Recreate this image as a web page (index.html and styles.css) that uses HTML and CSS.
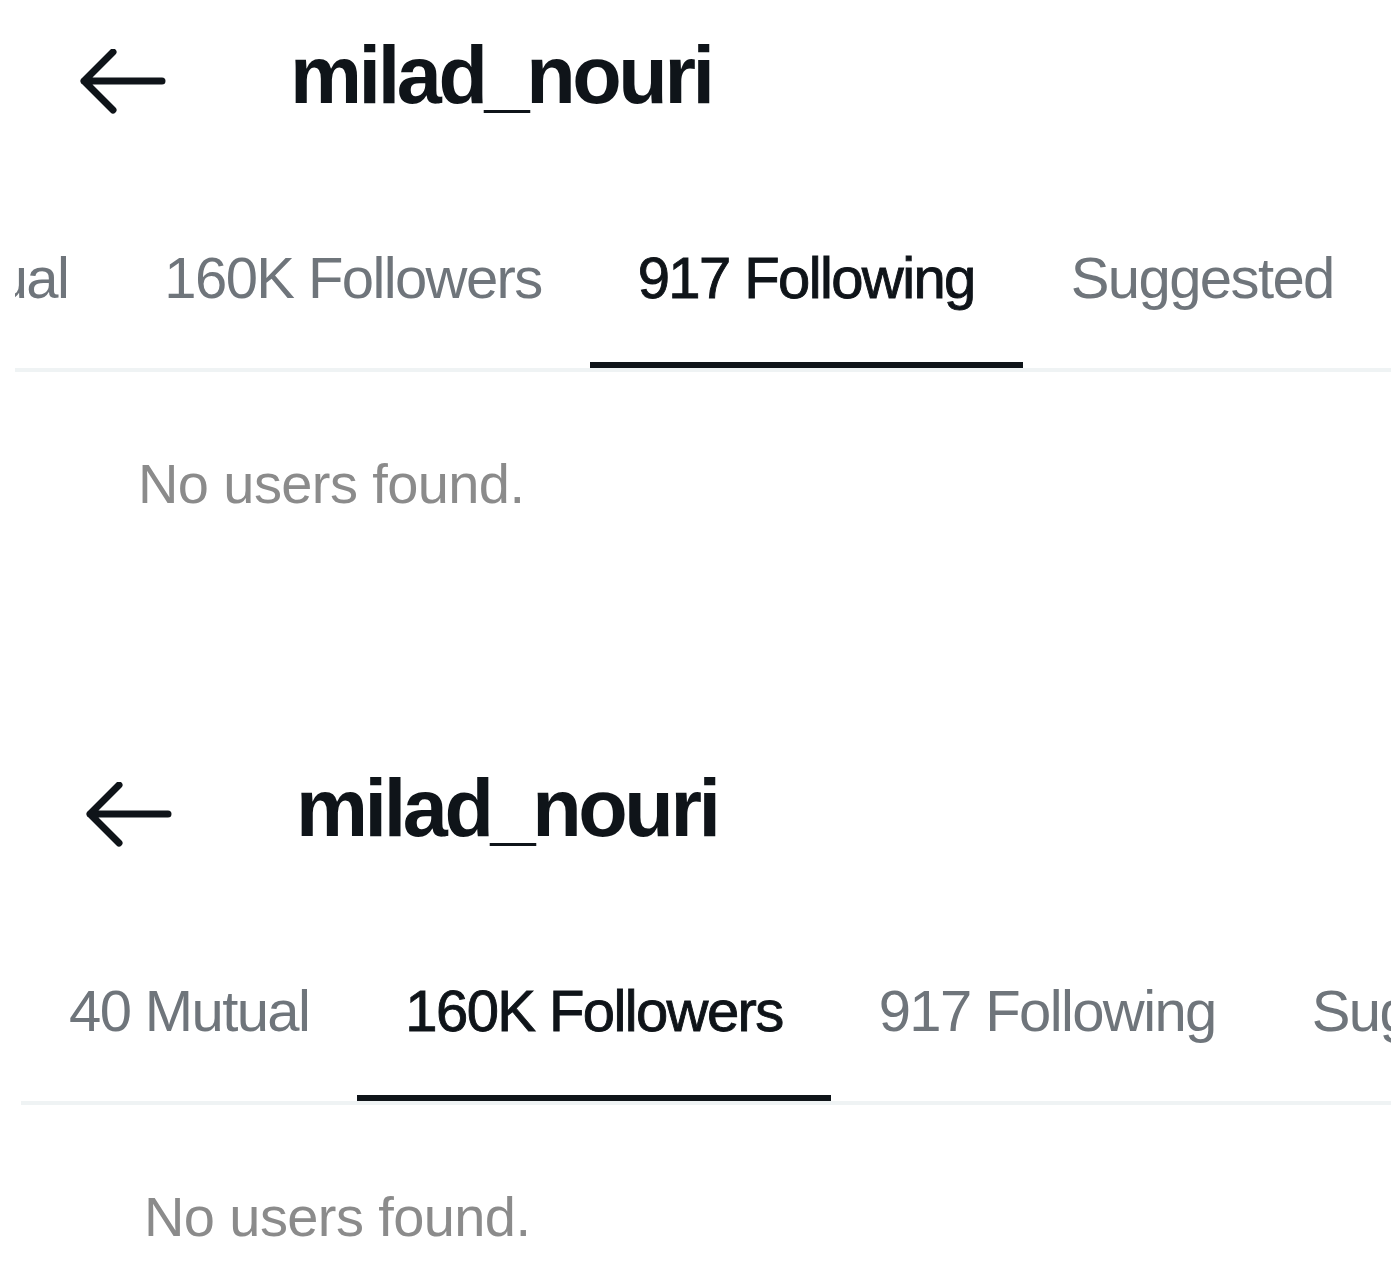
FILE: index.html
```html
<!DOCTYPE html>
<html lang="en">
<head>
<meta charset="utf-8">
<title>milad_nouri</title>
<link rel="stylesheet" href="styles.css">
</head>
<body>
  <section class="panel panel-first">
    <header class="header">
      <svg class="back" viewBox="0 0 92 66" width="92" height="66" aria-hidden="true">
        <path d="M36 3 L7 32 L36 61 M7 32 H85" fill="none" stroke="#0f1419" stroke-width="7" stroke-linecap="round" stroke-linejoin="round"/>
      </svg>
      <h1 class="title">milad_nouri</h1>
    </header>
    <nav class="tabs">
      <div class="tab-track tab-track-scrolled">
        <span class="tab">40 Mutual</span>
        <span class="tab">160K Followers</span>
        <span class="tab tab-active">917 Following</span>
        <span class="tab">Suggested</span>
      </div>
    </nav>
    <p class="empty">No users found.</p>
  </section>

  <section class="panel panel-second">
    <header class="header">
      <svg class="back" viewBox="0 0 92 66" width="92" height="66" aria-hidden="true">
        <path d="M36 3 L7 32 L36 61 M7 32 H85" fill="none" stroke="#0f1419" stroke-width="7" stroke-linecap="round" stroke-linejoin="round"/>
      </svg>
      <h1 class="title">milad_nouri</h1>
    </header>
    <nav class="tabs">
      <div class="tab-track">
        <span class="tab">40 Mutual</span>
        <span class="tab tab-active">160K Followers</span>
        <span class="tab">917 Following</span>
        <span class="tab">Suggested</span>
      </div>
    </nav>
    <p class="empty">No users found.</p>
  </section>
</body>
</html>
```

FILE: styles.css
```css
html, body {
  margin: 0;
  padding: 0;
  background: #ffffff;
}

body {
  font-family: "Liberation Sans", Arial, sans-serif;
  color: #0f1419;
  width: 1396px;
  height: 1268px;
  overflow: hidden;
}

.panel {
  margin-right: 5px;
  box-sizing: border-box;
}

.panel-first {
  height: 733px;
  padding-left: 15px;
}

.panel-second {
  height: 535px;
  padding-left: 21px;
}

.header {
  display: flex;
  align-items: flex-start;
  height: 249px;
  box-sizing: border-box;
  padding-top: 35px;
}

.back {
  display: block;
  flex: none;
  margin-left: 62px;
  margin-top: 14px;
}

.title {
  margin: 0 0 0 121px;
  font-size: 81px;
  line-height: 1;
  font-weight: 700;
  letter-spacing: -3.4px;
  color: #0f1419;
}

.tabs {
  overflow: hidden;
  border-bottom: 4px solid #eff3f4;
}

.tab-track {
  display: flex;
  white-space: nowrap;
}

.tab-track-scrolled {
  margin-left: -235px;
}

.tab {
  flex: none;
  padding: 0 48px 55px;
  font-size: 58px;
  line-height: 1;
  letter-spacing: -1.6px;
  color: #6f757b;
  border-bottom: 6px solid transparent;
}

.tab-active {
  color: #0f1419;
  border-bottom-color: #0f1419;
  -webkit-text-stroke: 0.9px #0f1419;
}

.empty {
  margin: 84px 0 0 123px;
  font-size: 56px;
  line-height: 1;
  letter-spacing: -0.6px;
  color: #8b8b8b;
}
```
